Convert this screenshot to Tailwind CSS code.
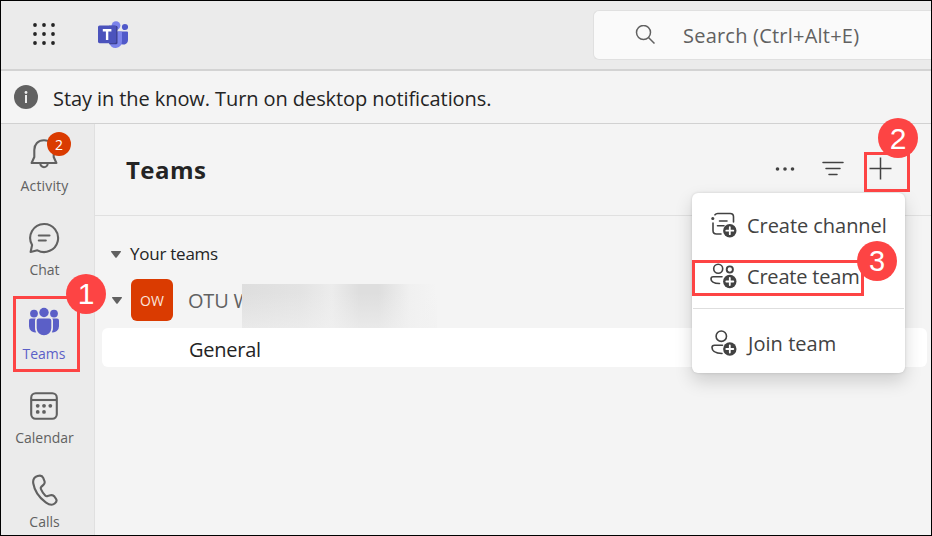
<!DOCTYPE html>
<html lang="en">
<head>
<meta charset="utf-8">
<title>Teams</title>
<script src="https://cdn.jsdelivr.net/npm/@tailwindcss/browser@4"></script>
</head>
<body class="bg-[#f4f4f4]">
<div class="relative flex h-[536px] w-[932px] flex-col overflow-hidden border border-black bg-[#f4f4f4] font-['Open_Sans','Noto_Sans',sans-serif] text-[#242424]">
  <header class="flex h-[70px] shrink-0 items-center border-b-2 border-[#d3d3d3] bg-[#ebebeb] pl-8">
    <svg class="h-6 w-6 shrink-0" viewBox="0 0 24 24" fill="#242424"><g><circle cx="2" cy="2" r="1.9"/><circle cx="11" cy="2" r="1.9"/><circle cx="20" cy="2" r="1.9"/><circle cx="2" cy="11" r="1.9"/><circle cx="11" cy="11" r="1.9"/><circle cx="20" cy="11" r="1.9"/><circle cx="2" cy="20" r="1.9"/><circle cx="11" cy="20" r="1.9"/><circle cx="20" cy="20" r="1.9"/></g></svg>
    <svg class="ml-[41px] h-7 w-[30px] shrink-0" viewBox="0 0 30 28"><circle cx="18" cy="4.600" r="4.400" fill="#7b83eb"/><circle cx="27" cy="6" r="3.100" fill="#5059c9"/><path d="M20 10.500h9a1 1 0 0 1 1 1V19a4.600 4.600 0 0 1-8.500 2.400z" fill="#5059c9"/><path d="M11 10.500h12a1 1 0 0 1 1 1V20a6.500 6.500 0 0 1-13 1z" fill="#7b83eb"/><path d="M11 4.800h7a1.500 1.500 0 0 1 1.500 1.500v15.400a1.500 1.500 0 0 1-1.500 1.500h-6.700z" fill="#3c408d"/><rect y="4.400" width="18.200" height="17.800" rx="1.600" fill="#4b53bc"/><path d="M4.800 9.200h8.600M9.100 9v10" stroke="#fff" stroke-width="2.400" fill="none"/></svg>
    <div class="ml-[465px] flex h-[50px] flex-1 items-center rounded-l-md border border-r-0 border-[#e0e0e0] bg-[#fafafa] pl-[41px]">
      <svg class="h-5 w-5" viewBox="0 0 20 20" fill="none" stroke="#616161" stroke-width="1.500"><circle cx="8.500" cy="7.500" r="7"/><path d="m13.500 12.500 6 6"/></svg>
      <span class="ml-[28px] pt-0.5 text-[20px] tracking-[0.220px] whitespace-nowrap text-[#616161]">Search (Ctrl+Alt+E)</span>
    </div>
  </header>
  <div class="flex h-[53px] shrink-0 items-center border-b border-[#d1d1d1] pl-[13px]">
    <svg class="h-6 w-6" viewBox="0 0 24 24"><circle cx="12" cy="12" r="12" fill="#616161"/><circle cx="12" cy="7.500" r="1.400" fill="#eee"/><path d="M12 10v8" stroke="#eee" stroke-width="2"/></svg>
    <span class="ml-[15px] pt-1 text-[20px] tracking-[-0.080px] whitespace-nowrap">Stay in the know. Turn on desktop notifications.</span>
  </div>
  <div class="flex min-h-0 flex-1">
    <nav class="flex w-[94px] shrink-0 flex-col border-r border-[#e0e0e0] bg-[#ebebeb] pr-[7px] text-[14px] text-[#616161]">
      <a class="flex h-[84px] shrink-0 flex-col items-center pt-[14px]">
        <span class="relative"><svg class="h-8 w-8" viewBox="0 0 32 32" fill="none" stroke="#616161" stroke-width="2.100" stroke-linejoin="round"><path d="M16 2.300c-6 0-9.700 4.200-9.700 9.700v7L3.600 25h24.800l-2.700-6v-7c0-5.500-3.700-9.700-9.700-9.700Z"/><path d="M12.300 25.500a3.700 3.700 0 0 0 7.400 0"/></svg><span class="absolute top-[-6px] left-[19px] flex h-6 w-6 items-center justify-center rounded-full bg-[#da3b01] text-[14px] text-white">2</span></span>
        <span class="mt-[5px] ml-px tracking-[0.150px]">Activity</span>
      </a>
      <a class="flex h-[84px] shrink-0 flex-col items-center pt-[14px]">
        <svg class="h-8 w-8" viewBox="0 0 32 32" fill="none" stroke="#616161" stroke-width="2.100" stroke-linecap="round" stroke-linejoin="round"><path d="M16 2a14 14 0 1 1-6.600 26.300L2.600 30l1.500-7A14 14 0 0 1 16 2Z"/><path d="M10.800 13.500h10.700M10.800 18.500h7"/></svg>
        <span class="mt-[5px] ml-px">Chat</span>
      </a>
      <a class="flex h-[84px] shrink-0 flex-col items-center pt-[14px] text-[#5b5fc7]">
        <svg class="h-8 w-8" viewBox="0 0 32 32" fill="#5b5fc7"><circle cx="16" cy="6.500" r="4.700"/><circle cx="6" cy="7.600" r="3.900"/><circle cx="26" cy="7.600" r="3.900"/><path d="M10.700 12.600h10.600a2 2 0 0 1 2 2V22a7.300 7.300 0 0 1-14.600 0v-7.400a2 2 0 0 1 2-2ZM3 12.600h4.700c-.5.700-.7 1.200-.7 2V22c0 1.700.4 3 1.200 4.300A6.200 6.200 0 0 1 1 20.200v-5.600a2 2 0 0 1 2-2ZM29 12.600h-4.700c.5.700.7 1.200.7 2V22c0 1.700-.4 3-1.200 4.300a6.200 6.200 0 0 0 7.200-6.100v-5.600a2 2 0 0 0-2-2Z"/></svg>
        <span class="mt-[5px]">Teams</span>
      </a>
      <a class="flex h-[84px] shrink-0 flex-col items-center pt-[14px]">
        <svg class="h-8 w-8" viewBox="0 0 32 32" fill="none" stroke="#616161" stroke-width="2.100"><rect x="3.200" y="3.200" width="25.600" height="25.600" rx="4.500"/><path d="M3 10h26"/><g fill="#616161" stroke="none"><circle cx="9.700" cy="15.800" r="1.900"/><circle cx="16" cy="15.800" r="1.900"/><circle cx="22.300" cy="15.800" r="1.900"/><circle cx="9.700" cy="21.900" r="1.900"/><circle cx="16" cy="21.900" r="1.900"/></g></svg>
        <span class="mt-[5px] ml-px">Calendar</span>
      </a>
      <a class="flex h-[84px] shrink-0 flex-col items-center pt-[14px]">
        <svg class="h-8 w-8" viewBox="0 0 32 32" fill="none" stroke="#616161" stroke-width="2.100" stroke-linejoin="round"><path d="M9.600 2c3-1 4.700-.3 5.600 1.800l1.200 3c.6 1.600.3 3-1 4.100l-2.200 2c-.6.600-.6 1.500 0 2.700 1 2.300 2.300 4.300 4 6 .8.800 1.600.8 2.500.5l2.700-.8c1.600-.5 3-.1 4 1.200l1.600 2.300c1.200 1.700.5 3.200-1.300 4.700-2.300 2-5.700 1.200-9-1.200C10.700 23.200 6.500 16.700 5.300 9.500 4.600 5.500 6.500 3 9.600 2Z"/></svg>
        <span class="mt-[5px] ml-px">Calls</span>
      </a>
    </nav>
    <main class="flex min-w-0 flex-1 flex-col">
      <div class="flex h-[92px] shrink-0 items-center border-b border-[#e0e0e0] pr-[39px] pl-[31px]">
        <h1 class="text-[24px] font-bold tracking-[0.450px]">Teams</h1>
        <div class="ml-auto flex items-center pb-[3px]">
          <svg class="h-6 w-6" viewBox="0 0 24 24" fill="#424242"><circle cx="5.500" cy="13" r="1.800"/><circle cx="13" cy="13" r="1.800"/><circle cx="20.500" cy="13" r="1.800"/></svg>
          <svg class="ml-[24px] h-6 w-6" viewBox="0 0 24 24" fill="none" stroke="#424242" stroke-width="1.500" stroke-linecap="round"><path d="M3 6.500h20M6 12.500h14M9 18.500h8"/></svg>
          <svg class="ml-[24px] h-6 w-6" viewBox="0 0 24 24" fill="none" stroke="#424242" stroke-width="1.500"><path d="M1.500 12.500h22M12.500 1.500v22"/></svg>
        </div>
      </div>
      <div class="flex flex-col pt-[24px]">
        <div class="flex h-7 items-center pl-4"><svg class="h-[7px] w-[10px]" viewBox="0 0 10 7" fill="#616161"><path d="M.5 0h9q.8.300.3 1L5.700 6.500q-.7.700-1.400 0L.2 1Q-.3.300.5 0Z"/></svg><span class="ml-[9px] text-[17px] tracking-[-0.250px]">Your teams</span></div>
        <div class="relative mt-[11px] flex h-[42px] items-center pl-[17px]"><svg class="h-[7px] w-[10px]" viewBox="0 0 10 7" fill="#616161"><path d="M.5 0h9q.8.300.3 1L5.700 6.500q-.7.700-1.400 0L.2 1Q-.3.300.5 0Z"/></svg>
          <span class="ml-[9px] flex h-[42px] w-[42px] items-center justify-center rounded-md bg-[#da3b01] text-[14px] text-[#fbe5dc]">OW</span>
          <span class="ml-[15px] pt-0.5 text-[20px] tracking-[-0.200px] whitespace-nowrap text-[#616161]">OTU W</span>
          <span class="absolute top-[5px] left-[147px] h-[44px] w-[195px] bg-[#f4f4f4] bg-[linear-gradient(180deg,#f4f4f400_20%,#f1f1f199_100%),linear-gradient(90deg,#dedede_0,#e3e3e3_30%,#ececec_46%,#dedede_60%,#dedede_70%,#f0f0f0_86%,#f4f4f4_100%)]"></span>
        </div>
        <div class="relative mt-[7px] mr-1 ml-[7px] flex h-[39px] items-center rounded-md bg-white pt-1 pl-[87px] text-[20px] tracking-[-0.250px]">General</div>
      </div>
    </main>
  </div>

  <!-- Add menu, opened from the plus button -->
  <div class="absolute top-[192px] left-[691px] flex h-[180px] w-[213px] flex-col rounded-md bg-white text-[20px] tracking-[-0.050px] whitespace-nowrap text-[#424242] shadow-[0_8px_18px_rgba(0,0,0,0.16),0_0_3px_rgba(0,0,0,0.14)]">
    <div class="mt-[7px] flex h-[51px] items-center pl-[18px]">
      <svg class="h-7 w-7" viewBox="0 0 28 28" fill="none" stroke="#424242" stroke-width="1.600" stroke-linecap="round"><path d="M5 2.800q1-1.300 2.700-1.300h12.500q3.300 0 3.300 3.300V10M3 11v7.500q0 3.500 3.500 3.500H11M9.500 9h7.500M7.500 13.800h6.500"/><circle cx="2.800" cy="6.500" r=".8" fill="#424242"/><circle cx="19.800" cy="18.700" r="6.700" fill="#424242" stroke="none"/><path d="M16.300 18.700h7M19.800 15.200v7" stroke="#fff" stroke-width="1.800"/></svg>
      <span class="ml-[9px]">Create channel</span>
    </div>
    <div class="flex h-[51px] items-center pl-[18px]">
      <svg class="h-7 w-7" viewBox="0 0 28 28" fill="none" stroke="#424242" stroke-width="1.600" stroke-linecap="round"><circle cx="8.200" cy="5.700" r="4.500"/><circle cx="19.800" cy="6.500" r="3.100" stroke-width="1.900"/><path d="M12 13.800H3.200Q1 13.800 1 16 1 20.300 9.500 20.500"/><circle cx="19.800" cy="18.500" r="6.700" fill="#424242" stroke="none"/><path d="M16.300 18.500h7M19.800 15v7" stroke="#fff" stroke-width="1.800"/></svg>
      <span class="ml-[9px] tracking-[-0.200px]">Create team</span>
    </div>
    <div class="mx-px mt-[6px] h-px bg-[#dedede]"></div>
    <div class="mt-[9px] flex h-[51px] items-center pl-[18px]">
      <svg class="h-7 w-7" viewBox="0 0 28 28" fill="none" stroke="#424242" stroke-width="1.600" stroke-linecap="round"><circle cx="11.300" cy="6.200" r="5.200"/><path d="M12.500 15.200H4.500Q2 15.200 2 17.500 2 23.200 12 23.500"/><circle cx="19.800" cy="19" r="6.700" fill="#424242" stroke="none"/><path d="M16.300 19h7M19.800 15.500v7" stroke="#fff" stroke-width="1.800"/></svg>
      <span class="ml-[10px] tracking-[0.050px]">Join team</span>
    </div>
  </div>

  <!-- Step callouts -->
  <div class="absolute top-[295px] left-[12px] h-[76px] w-[67px] border-3 border-[#fd4444]"></div>
  <div class="absolute top-[151px] left-[863px] h-[40px] w-[46px] border-3 border-[#fd4444]"></div>
  <div class="absolute top-[259px] left-[691px] h-[36px] w-[172px] border-3 border-[#fd4444]"></div>
  <div class="absolute top-[273px] left-[65px] flex h-10 w-10 items-center justify-center rounded-full bg-[#fd4444] font-['Liberation_Sans',sans-serif] text-[30px] leading-none text-white">1</div>
  <div class="absolute top-[117px] left-[877px] flex h-10 w-10 items-center justify-center rounded-full bg-[#fd4444] pt-px font-['Liberation_Sans',sans-serif] text-[30px] leading-none text-white">2</div>
  <div class="absolute top-[240px] left-[856px] flex h-10 w-10 items-center justify-center rounded-full bg-[#fd4444] pt-px font-['Liberation_Sans',sans-serif] text-[29px] leading-none text-white">3</div>
</div>
</body>
</html>
